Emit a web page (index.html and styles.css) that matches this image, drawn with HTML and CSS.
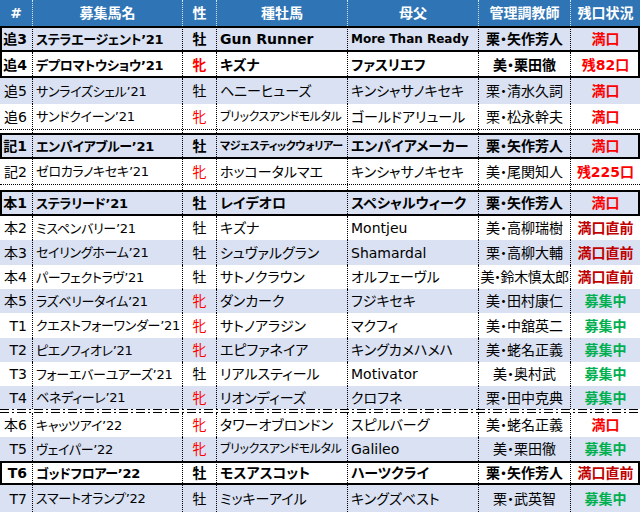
FILE: index.html
```html
<!DOCTYPE html>
<html lang="ja">
<head>
<meta charset="utf-8">
<title>募集馬一覧</title>
<link rel="stylesheet" href="styles.css">
</head>
<body>
<div class="sheet">
  <div class="row head h26">
    <div class="c">#</div><div class="c">募集馬名</div><div class="c">性</div><div class="c">種牡馬</div><div class="c">母父</div><div class="c">管理調教師</div><div class="c">残口状況</div>
  </div>

  <div class="row blue h26 box bold">
    <div class="no">追3</div><div class="name">ステラエージェント’21</div><div class="sex">牡</div><div class="sire lat">Gun Runner</div><div class="dam lat fitl">More Than Ready</div><div class="trn">栗・矢作芳人</div><div class="st full">満口</div>
  </div>
  <div class="row white h26 box-nt bold">
    <div class="no">追4</div><div class="name">デプロマトウショウ’21</div><div class="sex f">牝</div><div class="sire">キズナ</div><div class="dam">ファスリエフ</div><div class="trn">美・栗田徹</div><div class="st full">残82口</div>
  </div>
  <div class="row blue h26">
    <div class="no">追5</div><div class="name">サンライズシェル’21</div><div class="sex">牡</div><div class="sire">ヘニーヒューズ</div><div class="dam">キンシャサノキセキ</div><div class="trn">栗・清水久詞</div><div class="st full">満口</div>
  </div>
  <div class="row white h26 dl">
    <div class="no">追6</div><div class="name">サンドクイーン’21</div><div class="sex f">牝</div><div class="sire fit">ブリックスアンドモルタル</div><div class="dam">ゴールドアリュール</div><div class="trn">栗・松永幹夫</div><div class="st full">満口</div>
  </div>
  <div class="row white gap3">
    <div></div><div></div><div></div><div></div><div></div><div></div><div></div>
  </div>

  <div class="row blue h26 box bold">
    <div class="no">記1</div><div class="name">エンパイアブルー’21</div><div class="sex">牡</div><div class="sire fit2">マジェスティックウォリアー</div><div class="dam">エンパイアメーカー</div><div class="trn">栗・矢作芳人</div><div class="st full">満口</div>
  </div>
  <div class="row white h26 dl">
    <div class="no">記2</div><div class="name">ゼロカラノキセキ’21</div><div class="sex f">牝</div><div class="sire">ホッコータルマエ</div><div class="dam">キンシャサノキセキ</div><div class="trn">美・尾関知人</div><div class="st full">残225口</div>
  </div>
  <div class="row white gap5">
    <div></div><div></div><div></div><div></div><div></div><div></div><div></div>
  </div>

  <div class="row blue h26 box bold">
    <div class="no">本1</div><div class="name">ステラリード’21</div><div class="sex">牡</div><div class="sire">レイデオロ</div><div class="dam">スペシャルウィーク</div><div class="trn">栗・矢作芳人</div><div class="st full">満口</div>
  </div>
  <div class="row white h24">
    <div class="no">本2</div><div class="name">ミスペンバリー’21</div><div class="sex">牡</div><div class="sire">キズナ</div><div class="dam lat">Montjeu</div><div class="trn">美・高柳瑞樹</div><div class="st near">満口直前</div>
  </div>
  <div class="row blue h25">
    <div class="no">本3</div><div class="name">セイリングホーム’21</div><div class="sex">牡</div><div class="sire">シュヴァルグラン</div><div class="dam lat">Shamardal</div><div class="trn">栗・高柳大輔</div><div class="st near">満口直前</div>
  </div>
  <div class="row white h24">
    <div class="no">本4</div><div class="name">パーフェクトラヴ’21</div><div class="sex">牡</div><div class="sire">サトノクラウン</div><div class="dam">オルフェーヴル</div><div class="trn tight">美・鈴木慎太郎</div><div class="st near">満口直前</div>
  </div>
  <div class="row blue h24">
    <div class="no">本5</div><div class="name">ラズベリータイム’21</div><div class="sex f">牝</div><div class="sire">ダンカーク</div><div class="dam">フジキセキ</div><div class="trn">美・田村康仁</div><div class="st open">募集中</div>
  </div>
  <div class="row white h25">
    <div class="no">T1</div><div class="name">クエストフォーワンダー’21</div><div class="sex f">牝</div><div class="sire">サトノアラジン</div><div class="dam">マクフィ</div><div class="trn">美・中舘英二</div><div class="st open">募集中</div>
  </div>
  <div class="row blue h24">
    <div class="no">T2</div><div class="name">ピエノフィオレ’21</div><div class="sex f">牝</div><div class="sire">エピファネイア</div><div class="dam">キングカメハメハ</div><div class="trn">美・蛯名正義</div><div class="st open">募集中</div>
  </div>
  <div class="row white h24">
    <div class="no">T3</div><div class="name">フォーエバーユアーズ’21</div><div class="sex">牡</div><div class="sire">リアルスティール</div><div class="dam lat">Motivator</div><div class="trn">美・奥村武</div><div class="st open">募集中</div>
  </div>
  <div class="row blue h23">
    <div class="no">T4</div><div class="name">ベネディーレ’21</div><div class="sex f">牝</div><div class="sire">リオンディーズ</div><div class="dam">クロフネ</div><div class="trn">栗・田中克典</div><div class="st open">募集中</div>
  </div>

  <div class="sep"><div class="dashdot"></div><div class="dashdot"></div></div>

  <div class="row white h24">
    <div class="no">本6</div><div class="name">キャッツアイ’22</div><div class="sex f">牝</div><div class="sire">タワーオブロンドン</div><div class="dam">スピルバーグ</div><div class="trn">美・蛯名正義</div><div class="st full">満口</div>
  </div>
  <div class="row blue h24">
    <div class="no">T5</div><div class="name">ヴェイパー’22</div><div class="sex f">牝</div><div class="sire fit">ブリックスアンドモルタル</div><div class="dam lat">Galileo</div><div class="trn">美・栗田徹</div><div class="st open">募集中</div>
  </div>
  <div class="row white h24 box bold">
    <div class="no">T6</div><div class="name">ゴッドフロアー’22</div><div class="sex">牡</div><div class="sire">モスアスコット</div><div class="dam">ハーツクライ</div><div class="trn">栗・矢作芳人</div><div class="st near">満口直前</div>
  </div>
  <div class="row blue h27">
    <div class="no">T7</div><div class="name">スマートオランプ’22</div><div class="sex">牡</div><div class="sire">ミッキーアイル</div><div class="dam">キングズベスト</div><div class="trn">栗・武英智</div><div class="st open">募集中</div>
  </div>
</div>
</body>
</html>
```

FILE: styles.css
```css
* { box-sizing: border-box; }

body {
  margin: 0;
  background: #ffffff;
  color: #000000;
  font-family: "DejaVu Sans", "Noto Sans CJK JP", sans-serif;
  font-size: 14px;
  font-feature-settings: "palt";
}

.sheet {
  width: 640px;
  overflow: hidden;
}

.row {
  display: grid;
  grid-template-columns: 33px 150px 34px 131px 131px 92px 69px;
}

.row > div {
  display: flex;
  align-items: center;
  border-right: 1px dotted #000000;
  white-space: nowrap;
  overflow: hidden;
  line-height: 1;
}

.row > div:last-child { border-right: none; }

.h23 { height: 23px; }
.h24 { height: 24px; }
.h25 { height: 25px; }
.h26 { height: 26px; }
.h27 { height: 27px; }
.gap3 { height: 3px; }
.gap5 { height: 5px; }

.blue { background: #d9e1f2; }
.white { background: #ffffff; }

.head {
  background: #2f75b5;
  color: #ffffff;
  font-weight: bold;
}

.head > div {
  justify-content: center;
  border-right-color: rgba(255, 255, 255, 0.8);
}

.bold { font-weight: bold; }

.box {
  box-shadow: inset 2px 0 0 #000, inset -2px 0 0 #000, inset 0 2px 0 #000, inset 0 -2px 0 #000;
}

.box-nt {
  box-shadow: inset 2px 0 0 #000, inset -2px 0 0 #000, inset 0 -2px 0 #000;
}

.dl { border-bottom: 1px dotted #000000; }

.no {
  justify-content: flex-end;
  padding-right: 5px;
}

.name, .sire, .dam { padding-left: 3px; }

.name {
  font-size: 13px;
  letter-spacing: -0.3px;
}

.sex, .trn, .st { justify-content: center; }

.lat { font-size: 14px; }
.fitl { font-size: 12px; }
.fit { font-size: 12px; letter-spacing: -0.4px; }
.fit2 { font-size: 11px; letter-spacing: -0.4px; }
.tight { letter-spacing: -0.4px; }

.f { color: #ff0000; }

.st { font-weight: bold; }
.full { color: #ff0000; }
.near { color: #c00000; }
.open { color: #00b050; }

.sep {
  height: 4px;
  display: flex;
  flex-direction: column;
  justify-content: space-between;
  background: #ffffff;
}

.dashdot {
  height: 1px;
  background: repeating-linear-gradient(to right, #000 0 9px, transparent 9px 12px, #000 12px 14px, transparent 14px 17px);
}
```
